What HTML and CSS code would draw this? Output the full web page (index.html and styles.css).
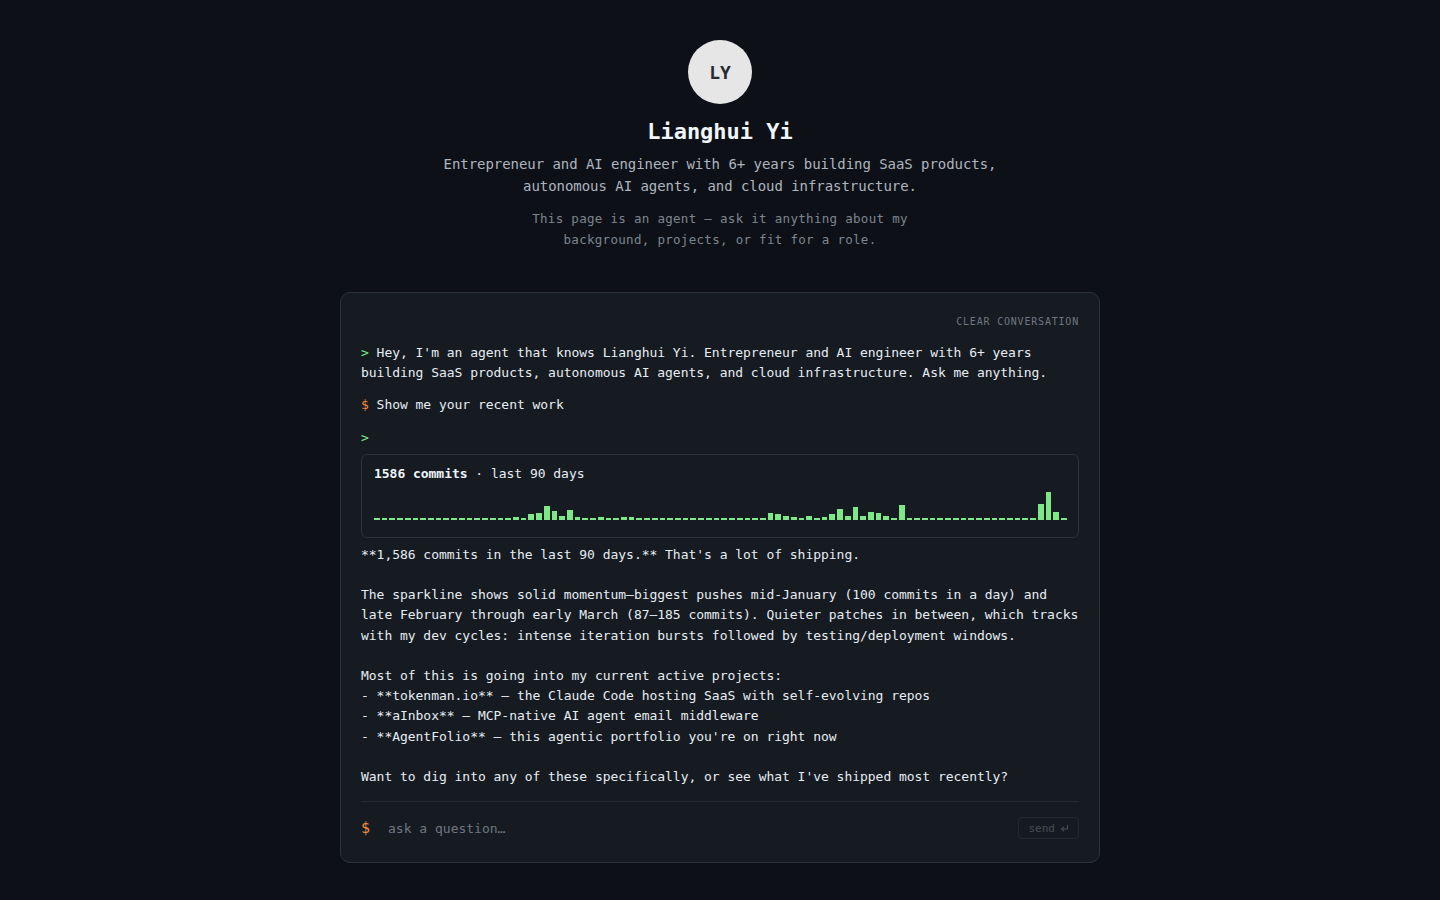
FILE: index.html
```html
<!DOCTYPE html>
<html lang="en">
<head>
<meta charset="utf-8">
<title>Lianghui Yi — Agent</title>
<link rel="stylesheet" href="styles.css">
</head>
<body>
<main class="page">
  <header class="hero">
    <div class="avatar">LY</div>
    <h1 class="name">Lianghui Yi</h1>
    <p class="tagline">Entrepreneur and AI engineer with 6+ years building SaaS products, autonomous AI agents, and cloud infrastructure.</p>
    <p class="hint">This page is an agent — ask it anything about my background, projects, or fit for a role.</p>
  </header>

  <section class="term">
    <div class="term-top">
      <button class="clear">CLEAR CONVERSATION</button>
    </div>
    <div class="log">
      <div class="msg"><span class="p-agent">&gt;</span> Hey, I'm an agent that knows Lianghui Yi. Entrepreneur and AI engineer with 6+ years building SaaS products, autonomous AI agents, and cloud infrastructure. Ask me anything.</div>
      <div class="msg"><span class="p-user">$</span> Show me your recent work</div>
      <div class="msg">
        <div><span class="p-agent">&gt;</span></div>
        <div class="chart">
          <div class="chart-title"><b>1586 commits</b> · last 90 days</div>
          <div class="bars">
            <i></i><i></i><i></i><i></i><i></i><i></i><i></i><i></i><i></i><i></i>
            <i></i><i></i><i></i><i></i><i></i><i></i><i></i><i></i><i style="height:2.5px"></i><i></i>
            <i style="height:6px"></i><i style="height:7px"></i><i style="height:14px"></i><i style="height:9px"></i><i style="height:4px"></i><i style="height:10px"></i><i style="height:2.5px"></i><i></i><i></i><i style="height:2.5px"></i>
            <i></i><i></i><i style="height:3px"></i><i style="height:3px"></i><i></i><i></i><i></i><i></i><i></i><i></i>
            <i></i><i></i><i></i><i></i><i></i><i></i><i></i><i></i><i></i><i></i>
            <i></i><i style="height:7px"></i><i style="height:6px"></i><i style="height:4px"></i><i style="height:3px"></i><i></i><i style="height:4px"></i><i></i><i style="height:2.5px"></i><i style="height:6px"></i>
            <i style="height:11px"></i><i style="height:4px"></i><i style="height:13px"></i><i style="height:4px"></i><i style="height:8px"></i><i style="height:7px"></i><i style="height:4px"></i><i></i><i style="height:15px"></i><i></i>
            <i></i><i></i><i></i><i></i><i></i><i></i><i></i><i></i><i></i><i></i>
            <i></i><i></i><i></i><i></i><i></i><i></i><i style="height:16px"></i><i style="height:28px"></i><i style="height:8px"></i><i></i>
          </div>
        </div>
        <div class="reply">**1,586 commits in the last 90 days.** That's a lot of shipping.

The sparkline shows solid momentum—biggest pushes mid-January (100 commits in a day) and late February through early March (87–185 commits). Quieter patches in between, which tracks with my dev cycles: intense iteration bursts followed by testing/deployment windows.

Most of this is going into my current active projects:
- **tokenman.io** — the Claude Code hosting SaaS with self-evolving repos
- **aInbox** — MCP-native AI agent email middleware
- **AgentFolio** — this agentic portfolio you're on right now

Want to dig into any of these specifically, or see what I've shipped most recently?</div>
      </div>
    </div>
    <form class="ask">
      <span class="ask-prompt">$</span>
      <input class="ask-input" type="text" placeholder="ask a question…">
      <button class="send" type="button">send
        <svg class="send-ico" width="9" height="9" viewBox="0 0 9 9" fill="none" stroke="currentColor" stroke-width="1.1" stroke-linecap="round" stroke-linejoin="round"><path d="M7.5 1.2v3.8H1.8"/><path d="M3.6 3.1 1.7 5 3.6 6.9"/></svg>
      </button>
    </form>
  </section>
</main>
</body>
</html>
```

FILE: styles.css
```css
* { box-sizing: border-box; }

html, body {
  margin: 0;
  padding: 0;
  background: #0d1117;
}

body {
  font-family: "DejaVu Sans Mono", "Liberation Mono", monospace;
  color: #e6edf3;
  min-height: 900px;
}

.page {
  display: flex;
  flex-direction: column;
  align-items: center;
  padding-top: 40px;
}

.hero {
  display: flex;
  flex-direction: column;
  align-items: center;
  text-align: center;
}

.avatar {
  width: 64px;
  height: 64px;
  border-radius: 50%;
  background: #e6e6e6;
  color: #272b31;
  display: flex;
  align-items: center;
  justify-content: center;
  font-size: 18px;
  font-weight: 700;
}

.name {
  margin: 14px 0 0;
  font-size: 22px;
  line-height: 28px;
  font-weight: 700;
  color: #f0f6fc;
}

.tagline {
  margin: 7px 0 0;
  max-width: 580px;
  font-size: 14px;
  line-height: 22px;
  color: #adb5bf;
  letter-spacing: -0.05px;
}

.hint {
  margin: 11px 0 0;
  max-width: 420px;
  font-size: 12.5px;
  letter-spacing: 0.3px;
  line-height: 21px;
  color: #7d8590;
}

.term {
  margin-top: 42px;
  width: 760px;
  background: #161b22;
  border: 1px solid #2c323a;
  border-radius: 10px;
  padding: 21px 20px 22px;
}

.term-top {
  display: flex;
  justify-content: flex-end;
}

.clear {
  background: none;
  border: 0;
  padding: 0;
  font-family: inherit;
  font-size: 10px;
  line-height: 16px;
  letter-spacing: 0.08em;
  color: #6e7681;
  cursor: pointer;
}

.log {
  margin-top: 13px;
  display: flex;
  flex-direction: column;
  gap: 12px;
  font-size: 13px;
  line-height: 20.2px;
  letter-spacing: -0.03px;
  color: #e6edf3;
}

.p-agent { color: #7ee787; }
.p-user { color: #f0883e; }

.chart {
  margin-top: 6px;
  border: 1px solid #2c323a;
  border-radius: 6px;
  padding: 9px 12px 17px;
}

.chart-title {
  font-size: 13px;
  line-height: 20px;
  color: #e6edf3;
}

.chart-title b {
  font-weight: 700;
  color: #f0f6fc;
}

.bars {
  margin-top: 6px;
  height: 30px;
  display: flex;
  align-items: flex-end;
  gap: 2px;
}

.bars i {
  flex: 1;
  height: 1.5px;
  background: #7ee787;
}

.reply {
  margin-top: 7px;
  white-space: pre-wrap;
}

.ask {
  margin-top: 14px;
  border-top: 1px solid #262c34;
  padding-top: 14px;
  display: flex;
  align-items: center;
  gap: 18px;
}

.ask-prompt {
  color: #f0883e;
  font-size: 15px;
  line-height: 24px;
}

.ask-input {
  flex: 1;
  background: transparent;
  border: 0;
  outline: none;
  font-family: inherit;
  font-size: 13px;
  color: #e6edf3;
  padding: 0;
}

.ask-input::placeholder {
  color: #6e7681;
}

.send {
  display: flex;
  align-items: center;
  gap: 5px;
  height: 22px;
  padding: 0 9px 0 10px;
  background: transparent;
  border: 1px solid #252a31;
  border-radius: 4px;
  font-family: inherit;
  font-size: 11px;
  color: #464d57;
}

.send-ico {
  display: block;
}
```
